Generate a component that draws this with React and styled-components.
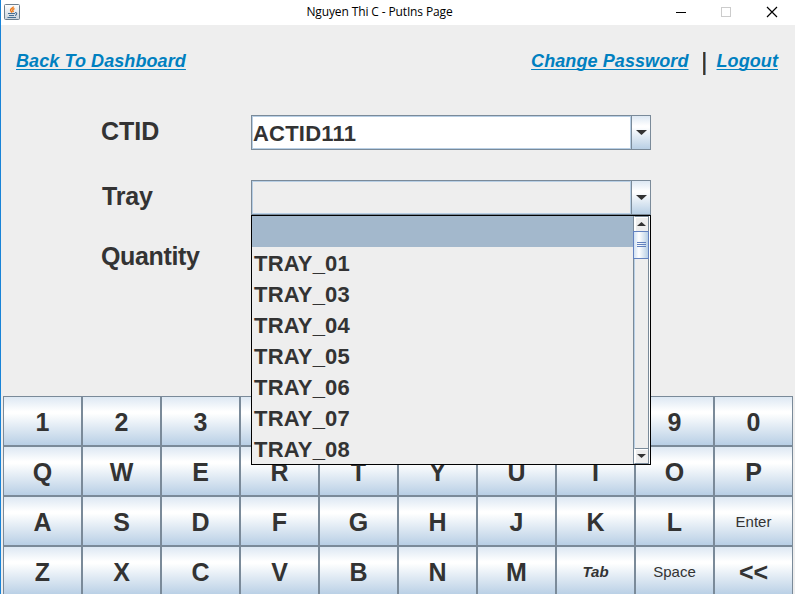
import React from "react";
import styled, { createGlobalStyle, css } from "styled-components";

const Global = createGlobalStyle`
  * { box-sizing: border-box; }
  body { margin: 0; background: #fff; overflow: hidden; }
`;

const metal = css`
  background: linear-gradient(to bottom, #dde8f3 0%, #ffffff 30%, #ffffff 34%, #b8cfe5 100%);
`;

const Window = styled.div`
  width: 795px;
  height: 594px;
  overflow: hidden;
  display: flex;
  flex-direction: column;
  border-left: 1px solid #1883d7;
  background: #eee;
  color: #333;
  font-family: "Liberation Sans", Arial, sans-serif;
`;

const TitleBar = styled.header`
  flex: none;
  height: 25px;
  display: grid;
  grid-template-columns: 99px 1fr 136px;
  background: #fff;
`;

const JavaIcon = styled.svg`
  margin: 4px 0 0 3px;
  width: 16px;
  height: 16px;
`;

const Title = styled.div`
  text-align: center;
  color: #000;
  font: 12px/24px "Open Sans", "Noto Sans", sans-serif;
  letter-spacing: -0.13px;
  white-space: nowrap;
`;

const Controls = styled.svg`
  width: 135px;
  height: 25px;
`;

const Nav = styled.nav`
  flex: none;
  height: 90px;
  padding: 23px 17px 0 15px;
  display: flex;
  align-items: flex-start;
`;

const Link = styled.a`
  color: #0080c0;
  font-size: 18px;
  font-weight: bold;
  font-style: italic;
  line-height: 26px;
  letter-spacing: 0.09px;
  white-space: nowrap;
  text-decoration: underline;
  text-decoration-thickness: 1px;
  text-underline-offset: 2px;
  text-decoration-skip-ink: none;
  margin-left: ${(p) => (p.$end ? "auto" : 0)};
`;

const Divider = styled.span`
  width: 3px;
  height: 23px;
  margin: 4px 10px 0 15px;
  background: linear-gradient(to right, #6b4a2b 0 1px, #333 1px 2px, #6f93b5 2px);
`;

const Form = styled.main`
  flex: none;
  height: 281px;
  padding-left: 100px;
  display: grid;
  grid-template-columns: 150px 400px;
  grid-template-rows: 35px 35px 35px;
  row-gap: 30px;
`;

const Label = styled.label`
  font-size: 25px;
  font-weight: bold;
  letter-spacing: ${(p) => p.$spacing || 0}px;
  line-height: ${(p) => p.$line || 33}px;
  padding-left: ${(p) => p.$indent || 0}px;
`;

const Combo = styled.div`
  position: relative;
  display: flex;
  height: 35px;
  border: 1px solid #7a8a99;
`;

const Value = styled.div`
  flex: 1;
  border: 1px solid #b8cfe5;
  background: ${(p) => (p.$empty ? "#eee" : "#fff")};
  font-size: 22px;
  letter-spacing: 0.2px;
  font-weight: bold;
  line-height: 34px;
`;

const Arrow = styled.div`
  ${metal}
  width: 19px;
  border-left: 1px solid #7a8a99;
  display: flex;
  align-items: center;
  justify-content: center;
`;

const Popup = styled.div`
  position: absolute;
  top: 34px;
  left: -1px;
  width: 400px;
  height: 250px;
  border: 1px solid #000;
  background: #eee;
  display: flex;
`;

const Options = styled.ul`
  flex: 1;
  margin: 0;
  padding: 0;
  list-style: none;
`;

const Option = styled.li`
  height: 31px;
  padding-left: 2px;
  font-size: 22px;
  letter-spacing: 0.2px;
  font-weight: bold;
  line-height: 33px;
  background: ${(p) => (p.$selected ? "#a3b8cc" : "transparent")};
`;

const Scrollbar = styled.div`
  width: 17px;
  display: flex;
  flex-direction: column;
  border-left: 1px solid #7a8a99;
  border-right: 1px solid #fff;
`;

const ScrollButton = styled.div`
  height: 16px;
  border: 1px solid #7a8a99;
  border-left-color: #fff;
  box-shadow: inset 1px 1px 0 #fff;
  display: flex;
  align-items: center;
  justify-content: center;
`;

const Track = styled.div`
  flex: 1;
  border-left: 1px solid #b8cfe5;
  border-right: 1px solid #7a8a99;
`;

const Thumb = styled.div`
  height: 28px;
  margin: -1px -1px 0 -2px;
  border: 1px solid #6382bf;
  background: linear-gradient(to right, #d2e2f3, #fff 35%, #b8cfe5);
  display: flex;
  align-items: center;
  justify-content: center;
`;

const Keyboard = styled.section`
  flex: none;
  margin-left: 2px;
  display: grid;
  grid-template-columns: repeat(10, 79px);
  grid-auto-rows: 50px;
`;

const Key = styled.button`
  ${metal}
  padding: 2px 0 0 0;
  border: 1px solid #7a8a99;
  border-radius: 0;
  color: #333;
  font-family: inherit;
  font-size: ${(p) => (p.$small ? 15 : 25)}px;
  font-weight: ${(p) => (p.$small && !p.$italic ? "normal" : "bold")};
  font-style: ${(p) => (p.$italic ? "italic" : "normal")};
  line-height: 30px;
`;

const keys = [..."1234567890", ..."QWERTYUIOP", ..."ASDFGHJKL", "Enter", ..."ZXCVBNM", "Tab", "Space", "<<"];
const trays = ["", "TRAY_01", "TRAY_03", "TRAY_04", "TRAY_05", "TRAY_06", "TRAY_07", "TRAY_08"];

function Triangle({ up, small }) {
  const w = small ? 9 : 11;
  const h = small ? 4 : 5;
  return (
    <svg width={w} height={h} viewBox={`0 0 ${w} ${h}`}>
      <path d={up ? `M0 ${h}H${w}L${w / 2} 0Z` : `M0 0H${w}L${w / 2} ${h}Z`} fill="#333" />
    </svg>
  );
}

export default function App() {
  return (
    <>
      <Global />
      <Window>
        <TitleBar>
          <JavaIcon viewBox="0 0 16 16">
            <defs>
              <linearGradient id="tile" x2="0" y2="1">
                <stop stopColor="#fff" />
                <stop offset="1" stopColor="#c9d3dc" />
              </linearGradient>
            </defs>
            <rect x=".5" y=".5" width="15" height="15" rx="1" fill="url(#tile)" stroke="#6c7f8f" />
            <path d="M9.5 2.500C9.500 4 6 4.500 6.500 6.500L8 8.500M10.500 4.500C8 5.500 8.500 6.500 9.500 8" fill="none" stroke="#ef7b1a" strokeWidth="1.400" />
            <path d="M4 9.500H11M5 11.500H10M3.500 13.500H12M11 8.500C13.500 8.500 13 11 11 11.500" fill="none" stroke="#456f94" strokeWidth="1.100" />
          </JavaIcon>
          <Title>Nguyen Thi C - PutIns Page</Title>
          <Controls viewBox="0 0 135 25" fill="none" shapeRendering="crispEdges">
            <path d="M17 12.500H27" stroke="#000" />
            <rect x="62.500" y="7.500" width="9" height="9" stroke="#ccc" />
            <path d="M108 7L118 17M118 7L108 17" stroke="#000" shapeRendering="auto" strokeWidth="1.200" />
          </Controls>
        </TitleBar>
        <Nav>
          <Link>Back To Dashboard</Link>
          <Link $end>Change Password</Link>
          <Divider />
          <Link>Logout</Link>
        </Nav>
        <Form>
          <Label>CTID</Label>
          <Combo>
            <Value>ACTID111</Value>
            <Arrow><Triangle /></Arrow>
          </Combo>
          <Label $indent={1} $spacing={-0.2}>Tray</Label>
          <Combo>
            <Value $empty />
            <Arrow><Triangle /></Arrow>
            <Popup>
              <Options>
                {trays.map((tray) => (
                  <Option key={tray} $selected={!tray}>{tray}</Option>
                ))}
              </Options>
              <Scrollbar>
                <ScrollButton><Triangle up small /></ScrollButton>
                <Track>
                  <Thumb>
                    <svg width="9" height="6" shapeRendering="crispEdges">
                      <path d="M0 .5H9M0 2.500H9M0 4.500H9" stroke="#6382bf" />
                    </svg>
                  </Thumb>
                </Track>
                <ScrollButton><Triangle small /></ScrollButton>
              </Scrollbar>
            </Popup>
          </Combo>
          <Label $line={23} $spacing={-0.35}>Quantity</Label>
        </Form>
        <Keyboard>
          {keys.map((key) => (
            <Key key={key} $small={key.length > 2} $italic={key === "Tab"}>{key}</Key>
          ))}
        </Keyboard>
      </Window>
    </>
  );
}
